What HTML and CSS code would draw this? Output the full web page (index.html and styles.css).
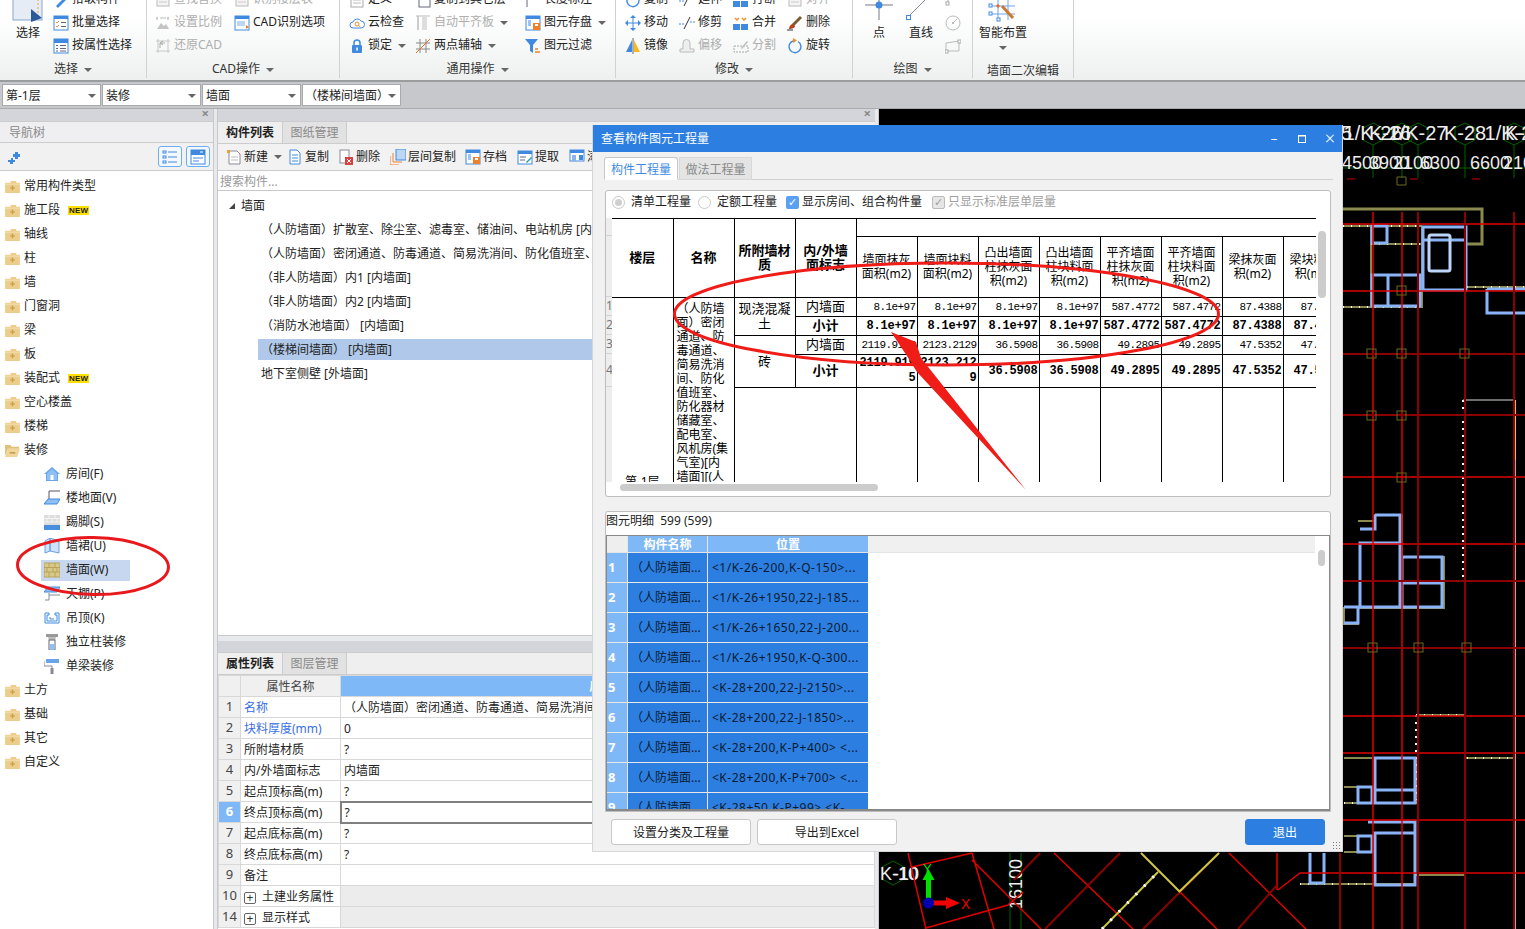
FILE: index.html
```html
<!DOCTYPE html>
<html lang="zh-CN">
<head>
<meta charset="utf-8">
<title>查看构件图元工程量</title>
<link rel="stylesheet" href="styles.css">
</head>
<body>
<svg class="defs" width="0" height="0" aria-hidden="true">
  <symbol id="pick" viewBox="0 0 16 16"><path d="M3 14l8-8 2 2-8 8z" fill="#3f8ae0"/></symbol>
  <symbol id="batch" viewBox="0 0 16 16"><rect x="1" y="1" width="14" height="14" fill="#fff" stroke="#3f8ae0"/><rect x="1" y="1" width="14" height="3" fill="#3f8ae0"/><path d="M3 7l1 1 2-2M3 11l1 1 2-2" fill="none" stroke="#f0902a"/><path d="M8 7.500h5M8 11.500h5" stroke="#666"/></symbol>
  <symbol id="prop" viewBox="0 0 16 16"><rect x="1" y="1" width="14" height="14" fill="#fff" stroke="#3f8ae0"/><rect x="1" y="1" width="14" height="4" fill="#3f8ae0"/><path d="M3 7.500h2M3 10.500h2M3 13h2M7 7.500h6M7 10.500h6M7 13h6" stroke="#667"/></symbol>
  <symbol id="gbox" viewBox="0 0 16 16"><rect x="2" y="3" width="12" height="11" fill="#f4f4f4" stroke="#bbb"/><path d="M4 7h8M4 10h8" stroke="#ccc"/></symbol>
  <symbol id="scale" viewBox="0 0 16 16"><path d="M2 14l4-6 3 3 2-2 3 5z" fill="#c4c4c4"/><path d="M2 2v3M1 3h2M13 2v3M12 3h2M5 3h6" stroke="#bbb" fill="none"/></symbol>
  <symbol id="restore" viewBox="0 0 16 16"><path d="M3 1v14M1 3h14M1 13h14M13 1v14" stroke="#c8c8c8"/><path d="M5 10V5h5M5 5l3-2M5 5l3 2" fill="none" stroke="#aaa"/></symbol>
  <symbol id="cad" viewBox="0 0 16 16"><rect x="1" y="1" width="14" height="14" fill="#fff" stroke="#3f8ae0"/><rect x="1" y="1" width="14" height="3" fill="#3f8ae0"/><rect x="3" y="6" width="8" height="5" fill="#bcd6f3"/><path d="M12 10l3 2-3 2z" fill="#f0802a"/></symbol>
  <symbol id="define" viewBox="0 0 16 16"><rect x="2" y="1" width="12" height="14" fill="#fff" stroke="#aaa"/><path d="M4 5h8M4 8h8M4 11h8" stroke="#bbb"/></symbol>
  <symbol id="cloud" viewBox="0 0 16 16"><path d="M4 13a3 3 0 0 1 0-6 4.500 4.500 0 0 1 8-1 3.500 3.500 0 0 1 0 7z" fill="#fff" stroke="#3f8ae0"/><circle cx="8" cy="9" r="2" fill="none" stroke="#f0902a"/><path d="M9.500 10.500l2 1.500" stroke="#f0902a"/></symbol>
  <symbol id="lock" viewBox="0 0 16 16"><path d="M5 8V5a3 3 0 0 1 6 0v3" fill="none" stroke="#3f8ae0" stroke-width="1.500"/><rect x="3" y="7" width="10" height="8" rx="1" fill="#3f8ae0"/><rect x="7.300" y="9.500" width="1.500" height="3" fill="#fff"/></symbol>
  <symbol id="level" viewBox="0 0 16 16"><rect x="2" y="1" width="2" height="14" fill="#ccc"/><rect x="7" y="2" width="5" height="13" fill="#ddd"/><path d="M1 1h14" stroke="#bbb"/></symbol>
  <symbol id="axis" viewBox="0 0 16 16"><path d="M5 1v14M11 1v14M1 5h14M1 11h14" stroke="#888"/><path d="M1 15L15 1" stroke="#f0702a"/></symbol>
  <symbol id="copy2" viewBox="0 0 16 16"><rect x="4" y="1" width="11" height="14" fill="#fff" stroke="#667"/></symbol>
  <symbol id="save" viewBox="0 0 16 16"><rect x="1" y="1" width="14" height="14" fill="#fff" stroke="#3f8ae0"/><rect x="1" y="1" width="14" height="3" fill="#3f8ae0"/><path d="M3 6h3M3 8h3M3 10h3" stroke="#3f8ae0"/><rect x="8" y="8" width="7" height="7" fill="#f0802a"/><rect x="10" y="9" width="3" height="2" fill="#fff"/></symbol>
  <symbol id="filter" viewBox="0 0 16 16"><path d="M0 1h13L8 7v8L5 13V7z" fill="#3f8ae0"/><path d="M10 11h3M10 14h5" stroke="#f0802a" stroke-width="1.500"/></symbol>
  <symbol id="measure" viewBox="0 0 16 16"><path d="M2 1v14" stroke="#667"/></symbol>
  <symbol id="move" viewBox="0 0 16 16"><path d="M8 3v10M3 8h10" stroke="#3f8ae0"/><path d="M8 0l3 3H5zM8 16l-3-3h6zM0 8l3-3v6zM16 8l-3 3V5z" fill="#3f8ae0"/></symbol>
  <symbol id="trim" viewBox="0 0 16 16"><path d="M0 9h5M11 7h5" stroke="#3f8ae0" stroke-dasharray="2 1"/><path d="M5 14l6-12" stroke="#334"/></symbol>
  <symbol id="merge" viewBox="0 0 16 16"><rect x="0" y="9" width="7" height="6" fill="#3f8ae0"/><rect x="8" y="9" width="7" height="6" fill="#3f8ae0"/><path d="M2 3l2 2 2-2M9 3l2 2 2-2" fill="none" stroke="#f0902a" stroke-width="1.500"/></symbol>
  <symbol id="erase" viewBox="0 0 16 16"><path d="M5 9l8-8 2 2-8 8z" fill="#7a5a30"/><path d="M2 14c0-3 2-5 4-5l2 2c0 2-3 3-6 3z" fill="#b8411a"/><path d="M0 15h6" stroke="#333"/></symbol>
  <symbol id="mirror" viewBox="0 0 16 16"><path d="M7 2v12H1z" fill="#3f8ae0"/><path d="M9 2v12h6z" fill="#f5b820"/><path d="M8 0v16" stroke="#666"/></symbol>
  <symbol id="offset" viewBox="0 0 16 16"><path d="M1 14v-3h3V5a3 3 0 0 1 7 0v6h4v3z" fill="#eee" stroke="#bbb"/></symbol>
  <symbol id="split" viewBox="0 0 16 16"><path d="M1 8h14v6H1z" fill="none" stroke="#aaa" stroke-dasharray="2 1"/><path d="M8 10l6-7 1 1-6 7z" fill="#bbb"/></symbol>
  <symbol id="rotate" viewBox="0 0 16 16"><path d="M6 3a6 6 0 1 0 5 .5" fill="none" stroke="#3f8ae0" stroke-width="1.400"/><path d="M6 0v5l4-2.500z" fill="#f0902a"/></symbol>
  <symbol id="delrow" viewBox="0 0 16 16"><rect x="2" y="1" width="9" height="13" fill="#fff" stroke="#889"/><rect x="7" y="8" width="8" height="8" fill="#d94040"/><path d="M9 10l4 4M13 10l-4 4" stroke="#fff"/></symbol>
  <symbol id="newdoc" viewBox="0 0 16 16"><path d="M3 2h8l3 3v10H3z" fill="#fff" stroke="#889"/><path d="M1 1h3v3H1z" fill="#f0a030"/><path d="M5 8h7M5 11h7" stroke="#bbb"/></symbol>
  <symbol id="copydoc" viewBox="0 0 16 16"><path d="M3 1h7l3 3v11H3z" fill="#fff" stroke="#3f8ae0"/><path d="M5 6h6M5 9h6M5 12h6" stroke="#3f8ae0"/></symbol>
  <symbol id="floorcopy" viewBox="0 0 16 16"><rect x="6" y="0" width="10" height="11" fill="#bcd6f3" stroke="#3f8ae0"/><path d="M3 4v9h9M0 7v9h9" fill="none" stroke="#f0802a"/></symbol>
  <symbol id="extract" viewBox="0 0 16 16"><rect x="1" y="2" width="14" height="13" fill="#fff" stroke="#3f8ae0"/><rect x="1" y="2" width="14" height="3" fill="#3f8ae0"/><path d="M3 8h6M3 11h5" stroke="#667"/><path d="M9 13l5-5 1 1-5 5z" fill="#2aa0a0"/></symbol>
  <symbol id="layout2" viewBox="0 0 16 16"><rect x="1" y="1" width="14" height="11" fill="#fff" stroke="#3f8ae0"/><rect x="1" y="1" width="14" height="3" fill="#3f8ae0"/><rect x="3" y="6" width="4" height="6" fill="#8ab4e8"/><rect x="10" y="6" width="4" height="5" fill="#3f8ae0"/></symbol>
  <symbol id="folder" viewBox="0 0 16 14"><path d="M0 3h6V1h6v2h4v11H0z" fill="#eccd8c"/><path d="M0 4h16v1H0z" fill="#f6e2b4"/><path d="M8 6v5M5.500 8.500h5" stroke="#c8a050" stroke-width="1.400"/></symbol>
  <symbol id="folderopen" viewBox="0 0 16 14"><path d="M0 1h6l1 2h8v2H3L0 13z" fill="#e3bf78"/><path d="M3 5h13l-3 9H0z" fill="#f0d498"/><path d="M5 9.500h6" stroke="#b8914a" stroke-width="1.400"/></symbol>
  <symbol id="house" viewBox="0 0 16 16"><path d="M8 1L0 8h2v7h12V8h2z" fill="#6aa5e8"/><path d="M8 3L3 7.500V14h10V7.500z" fill="#8fc0f4"/><rect x="6.500" y="9" width="3" height="5" fill="#fff"/></symbol>
  <symbol id="floor" viewBox="0 0 16 16"><path d="M5 9V1h11M5 9L0 14" fill="none" stroke="#556"/><path d="M4 9h12l-3 5H0z" fill="#8fc0f4" stroke="#3f8ae0"/></symbol>
  <symbol id="skirt" viewBox="0 0 16 16"><rect x="0" y="1" width="16" height="10" fill="#ddd"/><path d="M0 4.500h16M0 8h16M5 1v3.500M11 1v3.500M8 4.500V8M3 4.500V8M13 4.500V8" stroke="#f4f4f4"/><rect x="0" y="11" width="16" height="5" fill="#4a8ede"/></symbol>
  <symbol id="wains" viewBox="0 0 16 16"><path d="M1 3l5-3v13l-5 2zM6 0l9 3v12l-9-2z" fill="#cfe2f8" stroke="#6a9fe0"/></symbol>
  <symbol id="wallic" viewBox="0 0 16 16"><rect x="0" y="1" width="16" height="14" fill="#d8c88a" stroke="#b8a458"/><path d="M0 5.500h16M0 10h16M5 1v4.500M11 1v4.500M3 5.500V10M9 5.500V10M13 5.500V10M5 10v5M11 10v5" stroke="#b8a458"/></symbol>
  <symbol id="ceil" viewBox="0 0 16 16"><path d="M4 1h12l-3 5H0z" fill="#8fc0f4" stroke="#3f8ae0"/><path d="M5 7v7H1M5 9h11" fill="none" stroke="#889"/></symbol>
  <symbol id="susp" viewBox="0 0 16 16"><path d="M1 3h4v2H3v6h10V5h-2V3h4v10H1z" fill="#fff" stroke="#3f8ae0"/><path d="M6 7v2h4" fill="none" stroke="#3f8ae0"/></symbol>
  <symbol id="colm" viewBox="0 0 16 16"><rect x="2" y="0" width="12" height="3" fill="#999"/><path d="M4 3l1 3h6l1-3" fill="#bbb"/><rect x="5" y="6" width="6" height="10" fill="#fff" stroke="#667"/><path d="M6 16v-6h4v6z" fill="#8fc0f4"/></symbol>
  <symbol id="beam" viewBox="0 0 16 16"><rect x="2" y="1" width="13" height="4" fill="#6aa5e8"/><path d="M0 3v5h8v3" fill="none" stroke="#889"/><rect x="6.500" y="10" width="3" height="6" fill="#889"/></symbol>
  <symbol id="listv" viewBox="0 0 16 16"><rect x="1" y="2" width="3" height="2" fill="none" stroke="#3f8ae0"/><rect x="1" y="7" width="3" height="2" fill="none" stroke="#3f8ae0"/><rect x="1" y="12" width="3" height="2" fill="none" stroke="#3f8ae0"/><path d="M6 3h9M6 8h9M6 13h9" stroke="#3f8ae0"/></symbol>
  <symbol id="panelv" viewBox="0 0 16 16"><rect x="1" y="1" width="14" height="14" fill="#fff" stroke="#3f8ae0"/><rect x="1" y="1" width="14" height="5" fill="#3f8ae0"/><path d="M3 9h10M3 12h6" stroke="#3f8ae0"/><path d="M10 3h3" stroke="#fff"/></symbol>
  <symbol id="pin" viewBox="0 0 12 12"><path d="M7 0h3v2h2v3h-2v2H7V5H5V2h2zM3 6h2v2h2v2H5v2H2v-2H0V8h3z" fill="#3f8ae0"/></symbol>
</svg>

<div class="app">
  <header class="ribbon">
    <section class="rg g1">
      <div class="rb pad3">
        <div class="bigbtn w50">
          <svg class="bigic" viewBox="0 0 34 22"><rect x="2" y="-9" width="29" height="29" fill="#e6ecf5" stroke="#8aa8c8"/><path d="M6 -4h21v20" fill="none" stroke="#f0a030" stroke-dasharray="2 2"/><path d="M20 9l11 9-11 4z" fill="#2a5a9a"/></svg>
          <span>选择</span>
        </div>
        <div class="rc">
          <span class="ri"><svg class="ic"><use href="#pick"/></svg>拾取构件</span>
          <span class="ri"><svg class="ic"><use href="#batch"/></svg>批量选择</span>
          <span class="ri"><svg class="ic"><use href="#prop"/></svg>按属性选择</span>
        </div>
      </div>
      <div class="rl">选择<i class="caret"></i></div>
    </section>
    <section class="rg g2">
      <div class="rb pad8">
        <div class="rc w79">
          <span class="ri off"><svg class="ic"><use href="#gbox"/></svg>查找替换</span>
          <span class="ri off"><svg class="ic"><use href="#scale"/></svg>设置比例</span>
          <span class="ri off"><svg class="ic"><use href="#restore"/></svg>还原CAD</span>
        </div>
        <div class="rc">
          <span class="ri off"><svg class="ic"><use href="#gbox"/></svg>识别楼层表</span>
          <span class="ri"><svg class="ic"><use href="#cad"/></svg>CAD识别选项</span>
        </div>
      </div>
      <div class="rl">CAD操作<i class="caret"></i></div>
    </section>
    <section class="rg g3">
      <div class="rb pad9">
        <div class="rc w66">
          <span class="ri"><svg class="ic"><use href="#define"/></svg>定义</span>
          <span class="ri"><svg class="ic"><use href="#cloud"/></svg>云检查</span>
          <span class="ri"><svg class="ic"><use href="#lock"/></svg>锁定<i class="caret"></i></span>
        </div>
        <div class="rc w110">
          <span class="ri"><svg class="ic"><use href="#copy2"/></svg>复制到其它层</span>
          <span class="ri off"><svg class="ic"><use href="#level"/></svg>自动平齐板<i class="caret"></i></span>
          <span class="ri"><svg class="ic"><use href="#axis"/></svg>两点辅轴<i class="caret"></i></span>
        </div>
        <div class="rc">
          <span class="ri"><svg class="ic"><use href="#measure"/></svg>长度标注</span>
          <span class="ri"><svg class="ic"><use href="#save"/></svg>图元存盘<i class="caret"></i></span>
          <span class="ri"><svg class="ic"><use href="#filter"/></svg>图元过滤</span>
        </div>
      </div>
      <div class="rl">通用操作<i class="caret"></i></div>
    </section>
    <section class="rg g4">
      <div class="rb pad9">
        <div class="rc w54">
          <span class="ri"><svg class="ic"><use href="#rotate"/></svg>复制</span>
          <span class="ri"><svg class="ic"><use href="#move"/></svg>移动</span>
          <span class="ri"><svg class="ic"><use href="#mirror"/></svg>镜像</span>
        </div>
        <div class="rc w54">
          <span class="ri"><svg class="ic"><use href="#trim"/></svg>延伸</span>
          <span class="ri"><svg class="ic"><use href="#trim"/></svg>修剪</span>
          <span class="ri off"><svg class="ic"><use href="#offset"/></svg>偏移</span>
        </div>
        <div class="rc w54">
          <span class="ri"><svg class="ic"><use href="#merge"/></svg>打断</span>
          <span class="ri"><svg class="ic"><use href="#merge"/></svg>合并</span>
          <span class="ri off"><svg class="ic"><use href="#split"/></svg>分割</span>
        </div>
        <div class="rc w54">
          <span class="ri off"><svg class="ic"><use href="#gbox"/></svg>对齐</span>
          <span class="ri"><svg class="ic"><use href="#erase"/></svg>删除</span>
          <span class="ri"><svg class="ic"><use href="#rotate"/></svg>旋转</span>
        </div>
      </div>
      <div class="rl">修改<i class="caret"></i></div>
    </section>
    <section class="rg g5">
      <div class="rb">
        <div class="bigbtn w52">
          <svg class="bigic" viewBox="0 0 34 22"><path d="M17 0v20M3 5h28" stroke="#778" fill="none"/><circle cx="17" cy="5" r="3.500" fill="#3f8ae0"/></svg>
          <span>点</span>
        </div>
        <div class="bigbtn w32">
          <svg class="bigic" viewBox="0 0 34 22"><path d="M5 16L24 -3" stroke="#889"/><rect x="2.500" y="15.500" width="4" height="4" fill="#fff" stroke="#3f8ae0"/></svg>
          <span>直线</span>
        </div>
        <div class="rc smallc">
          <svg class="sm"><path d="M3 12V2" stroke="#aaa"/><rect x="1" y="10" width="3" height="3" fill="#fff" stroke="#aaa"/></svg>
          <svg class="sm" viewBox="0 0 16 16"><circle cx="8" cy="8" r="7" fill="none" stroke="#bbb"/><circle cx="8" cy="8" r="1" fill="#aaa"/><path d="M8 8l4-4" stroke="#bbb"/></svg>
          <svg class="sm" viewBox="0 0 16 16"><path d="M1 5l13-2v10H1z" fill="none" stroke="#bbb"/><rect x="0" y="12" width="3" height="3" fill="#fff" stroke="#aaa"/><rect x="13" y="2" width="3" height="3" fill="#fff" stroke="#aaa"/></svg>
        </div>
      </div>
      <div class="rl">绘图<i class="caret"></i></div>
    </section>
    <section class="rg g6">
      <div class="rb">
        <div class="bigbtn w60">
          <svg class="bigic" viewBox="0 0 34 22"><path d="M5 6h24M5 14h24M12 -2v22M22 -2v22" stroke="#6aa5e8" fill="none"/><rect x="3" y="4" width="3" height="3" fill="#fff" stroke="#3f8ae0"/><rect x="3" y="12" width="3" height="3" fill="#fff" stroke="#3f8ae0"/><rect x="11" y="18" width="3" height="3" fill="#fff" stroke="#3f8ae0"/><path d="M16 6l11 12" stroke="#c87a30" stroke-width="3"/><path d="M12 4l2 2-2 2-2-2z" fill="#f0602a"/></svg>
          <span>智能布置</span>
          <i class="caret solo"></i>
        </div>
      </div>
      <div class="rl edit">墙面二次编辑</div>
    </section>
  </header>

  <div class="combos">
    <div class="combo c99">第-1层<i class="caret"></i></div>
    <div class="combo c99">装修<i class="caret"></i></div>
    <div class="combo c99">墙面<i class="caret"></i></div>
    <div class="combo c99 last">（楼梯间墙面）<i class="caret"></i></div>
  </div>

  <main class="main">
    <aside class="nav">
      <div class="strip"><span class="close">×</span></div>
      <div class="navtitle">导航树</div>
      <div class="navtools">
        <svg class="pinic"><use href="#pin"/></svg>
        <span class="toolbtn"><svg class="ic"><use href="#listv"/></svg></span>
        <span class="toolbtn"><svg class="ic"><use href="#panelv"/></svg></span>
      </div>
      <ul class="navtree">
        <li class="nt"><svg class="fo"><use href="#folder"/></svg>常用构件类型</li>
        <li class="nt"><svg class="fo"><use href="#folder"/></svg>施工段<b class="new">NEW</b></li>
        <li class="nt"><svg class="fo"><use href="#folder"/></svg>轴线</li>
        <li class="nt"><svg class="fo"><use href="#folder"/></svg>柱</li>
        <li class="nt"><svg class="fo"><use href="#folder"/></svg>墙</li>
        <li class="nt"><svg class="fo"><use href="#folder"/></svg>门窗洞</li>
        <li class="nt"><svg class="fo"><use href="#folder"/></svg>梁</li>
        <li class="nt"><svg class="fo"><use href="#folder"/></svg>板</li>
        <li class="nt"><svg class="fo"><use href="#folder"/></svg>装配式<b class="new">NEW</b></li>
        <li class="nt"><svg class="fo"><use href="#folder"/></svg>空心楼盖</li>
        <li class="nt"><svg class="fo"><use href="#folder"/></svg>楼梯</li>
        <li class="nt"><svg class="fo"><use href="#folderopen"/></svg>装修</li>
        <li class="nt sub"><span class="si"><svg class="ic"><use href="#house"/></svg>房间(F)</span></li>
        <li class="nt sub"><span class="si"><svg class="ic"><use href="#floor"/></svg>楼地面(V)</span></li>
        <li class="nt sub"><span class="si"><svg class="ic"><use href="#skirt"/></svg>踢脚(S)</span></li>
        <li class="nt sub"><span class="si"><svg class="ic"><use href="#wains"/></svg>墙裙(U)</span></li>
        <li class="nt sub"><span class="si on"><svg class="ic"><use href="#wallic"/></svg>墙面(W)</span></li>
        <li class="nt sub"><span class="si"><svg class="ic"><use href="#ceil"/></svg>天棚(P)</span></li>
        <li class="nt sub"><span class="si"><svg class="ic"><use href="#susp"/></svg>吊顶(K)</span></li>
        <li class="nt sub"><span class="si"><svg class="ic"><use href="#colm"/></svg>独立柱装修</span></li>
        <li class="nt sub"><span class="si"><svg class="ic"><use href="#beam"/></svg>单梁装修</span></li>
        <li class="nt"><svg class="fo"><use href="#folder"/></svg>土方</li>
        <li class="nt"><svg class="fo"><use href="#folder"/></svg>基础</li>
        <li class="nt"><svg class="fo"><use href="#folder"/></svg>其它</li>
        <li class="nt"><svg class="fo"><use href="#folder"/></svg>自定义</li>
      </ul>
    </aside>

    <div class="mid">
      <section class="list">
        <div class="strip"><span class="close">×</span></div>
        <div class="tabs">
          <span class="tab on">构件列表</span><span class="tab">图纸管理</span>
        </div>
        <div class="tools">
          <span class="ti t55"><svg class="ic"><use href="#newdoc"/></svg>新建<i class="caret"></i></span>
          <span class="ti t51"><svg class="ic"><use href="#copydoc"/></svg>复制</span>
          <span class="ti t52"><svg class="ic"><use href="#delrow"/></svg>删除</span>
          <span class="ti t75"><svg class="ic"><use href="#floorcopy"/></svg>层间复制</span>
          <span class="ti t52"><svg class="ic"><use href="#save"/></svg>存档</span>
          <span class="ti t52"><svg class="ic"><use href="#extract"/></svg>提取</span>
          <span class="ti t52"><svg class="ic"><use href="#layout2"/></svg>添加前后缀</span>
        </div>
        <div class="search">搜索构件...</div>
        <div class="ctree">
          <div class="root"><i class="tri"></i>墙面</div>
          <div class="leaf">（人防墙面）扩散室、除尘室、滤毒室、储油间、电站机房 [内墙面]</div>
          <div class="leaf">（人防墙面）密闭通道、防毒通道、简易洗消间、防化值班室、防化器材储藏室 [内墙面]</div>
          <div class="leaf">（非人防墙面）内1 [内墙面]</div>
          <div class="leaf">（非人防墙面）内2 [内墙面]</div>
          <div class="leaf">（消防水池墙面） [内墙面]</div>
          <div class="leaf sel">（楼梯间墙面） [内墙面]</div>
          <div class="leaf">地下室侧壁 [外墙面]</div>
        </div>
      </section>
      <section class="props">
        <div class="strip short"></div>
        <div class="tabs">
          <span class="tab on">属性列表</span><span class="tab">图层管理</span>
        </div>
        <table class="ptable">
          <colgroup><col class="pc0"><col class="pc1"><col></colgroup>
          <tr><th></th><th>属性名称</th><th class="blue">属性值</th></tr>
          <tr><td class="n">1</td><td class="link">名称</td><td>（人防墙面）密闭通道、防毒通道、简易洗消间、防化值班室、防化器材储藏室</td></tr>
          <tr><td class="n">2</td><td class="link">块料厚度(mm)</td><td>0</td></tr>
          <tr><td class="n">3</td><td>所附墙材质</td><td>?</td></tr>
          <tr><td class="n">4</td><td>内/外墙面标志</td><td>内墙面</td></tr>
          <tr><td class="n">5</td><td>起点顶标高(m)</td><td>?</td></tr>
          <tr><td class="n act">6</td><td>终点顶标高(m)</td><td class="edit">?</td></tr>
          <tr><td class="n">7</td><td>起点底标高(m)</td><td>?</td></tr>
          <tr><td class="n">8</td><td>终点底标高(m)</td><td>?</td></tr>
          <tr><td class="n">9</td><td>备注</td><td></td></tr>
          <tr class="grp"><td class="n">10</td><td><span class="plus">+</span>土建业务属性</td><td></td></tr>
          <tr class="grp"><td class="n">14</td><td><span class="plus">+</span>显示样式</td><td></td></tr>
        </table>
      </section>
    </div>

    <div class="canvas">
      <svg class="cad" viewBox="879 109 646 820" xmlns="http://www.w3.org/2000/svg">
        <g fill="none" stroke="#006400">
          <path d="M1343 168H1525M1373 145V178M1402 145V178M1418 145V178M1465 145V178M1514 145V178"/>
          <path d="M1373 123l10 5v12l-10 5-10-5v-12zM1402 123l10 5v12l-10 5-10-5v-12zM1418 123l10 5v12l-10 5-10-5v-12zM1465 123l10 5v12l-10 5-10-5v-12zM1514 123l10 5v12l-10 5-10-5v-12z"/>
          <path d="M893 861l11 6v12l-11 6-11-6v-12z"/>
          <path d="M1010 853V929M1021 853V929"/>
        </g>
        <path d="M1347 179h8M1410 179h8M1472 179h8" stroke="#c00" stroke-width="1"/>
        <g fill="#eee" font-family="'Liberation Sans',sans-serif" font-size="20" text-anchor="middle">
          <text x="1331" y="140">K-25</text><text x="1373" y="140">1/K-26</text><text x="1390" y="140">K-26</text><text x="1418" y="140">1/K-27</text><text x="1465" y="140">K-28</text><text x="1514" y="140">1/K-28</text><text x="1526" y="140">K-29</text>
        </g>
        <g fill="#eee" font-family="'Liberation Sans',sans-serif" font-size="18">
          <text x="1342" y="169">4500</text><text x="1369" y="169">3900</text><text x="1393" y="169">2100</text><text x="1420" y="169">6300</text><text x="1470" y="169">6600</text><text x="1503" y="169">2100</text>
          <text x="880" y="880">K-10</text><text x="893" y="880">-10</text>
          <text transform="translate(1022 909) rotate(-90)">16100</text>
        </g>
        <g fill="none" stroke="#8a8a50" stroke-width="2">
          <path d="M1343 209H1482V244H1465" stroke-width="3"/>
          <path d="M1343 226H1422M1371 226V307M1343 307H1422V226M1370 244H1422"/>
          <path d="M1465 287H1525M1358 521H1375V515H1402V557H1444V608H1358M1344 607V624H1358V607M1344 758H1372M1344 787H1372M1344 803H1416V758M1344 836H1372M1344 852H1372M1300 884H1416M1416 875H1465M1416 715H1465V758H1515V500"/>
        </g>
        <path d="M1343 226H1422M1371 244H1422M1343 307H1422M1416 715H1465M1467 758H1515M1344 803H1372M1300 884H1372M1467 287H1525M1372 822H1415" stroke="#fff" stroke-dasharray="1 7" fill="none" stroke-width="2"/>
        <path d="M1463 400V581M1463 581H1515M1416 715V800" stroke="#fff" stroke-dasharray="2 5" fill="none" stroke-width="2"/>
        <path d="M1463 400H1515" stroke="#ddd" fill="none"/>
        <path d="M1515 400V460" stroke="#f5c400" stroke-width="2" fill="none"/>
        <path d="M1515 460V929M1465 760V925" stroke="#aaa" stroke-width="2" fill="none"/>
        <g fill="none" stroke="#8ab4f8" stroke-width="3">
          <path d="M1372 226H1387V243H1372z"/>
          <path d="M1423 227H1466V290H1423zM1423 240H1466"/>
          <rect x="1429" y="235" width="21" height="36" rx="2" stroke="#bcd4fa"/>
          <path d="M1372 275H1420V306H1372zM1388 275V306"/>
          <path d="M1487 289H1525M1487 289V313H1525"/>
          <path d="M1375 515H1400V543H1360V607H1400V543M1360 529H1375V515"/>
          <path d="M1402 557H1442V607H1402zM1402 583H1442"/>
          <path d="M1344 607H1358V623H1344"/>
          <path d="M1375 758H1415V803H1375zM1375 790H1415"/>
          <path d="M1358 787H1372V803H1358z"/>
          <path d="M1368 822H1415V885H1375V833H1415"/>
          <path d="M1358 836H1372V852H1358z"/>
          <path d="M1310 853V883H1324V853"/>
        </g>
        <g fill="none" stroke="#e00000" stroke-width="1.500">
          <path d="M1343 224H1525M1343 291H1525M1343 477H1525M1343 544H1525M1343 716H1525M1343 753H1525M1343 820H1525"/>
          <path d="M1373 212V929M1402 212V929"/>
          <path d="M908 853L926 929M912 867L972 853M926 928L1008 905L1023 892M972 853L989 912L994 929M972 860L1041 929M1054 853L1133 929M1141 853L1217 929M1229 853L1306 929M1277 853V890M1278 890L1300 873H1525"/>
        </g>
        <g fill="none" stroke="#8b0000" stroke-width="2">
          <path d="M1418 212V929M1465 212V929M1514 212V929M1340 853V929"/>
          <path d="M1343 354H1525M1343 415H1525M1343 581H1525M1343 648H1525"/>
          <path d="M1045 929L1120 853M1014 880L1040 853M1143 929L1219 853M1238 929L1277 885"/>
        </g>
        <g fill="none" stroke="#6a6a20">
          <rect x="1367" y="349" width="9" height="9"/><rect x="1397" y="349" width="9" height="9"/><rect x="1460" y="349" width="9" height="9"/>
          <rect x="1367" y="411" width="9" height="9"/><rect x="1397" y="411" width="9" height="9"/><rect x="1397" y="473" width="9" height="9"/>
          <rect x="1368" y="643" width="9" height="9"/><rect x="1414" y="643" width="9" height="9"/><rect x="1462" y="643" width="9" height="9"/>
          <rect x="1397" y="286" width="9" height="9"/><path d="M1397 177h9v8h-9z"/>
        </g>
        <path d="M1102 929L1158 872M1179 892L1219 853M1141 853L1180 892" stroke="#c8c840" stroke-width="2" fill="none"/>
        <path d="M1102 929L1158 872" stroke="#fff" stroke-dasharray="2 10" stroke-width="3" fill="none"/>
        <path d="M928.500 903V875" stroke="#00e000" stroke-width="5"/>
        <path d="M928.500 869l-6 11h12z" fill="#00e000"/>
        <path d="M928.500 903H948" stroke="#f00000" stroke-width="5"/>
        <path d="M960 903l-14-6v12z" fill="#f00000"/>
        <circle cx="928.500" cy="903" r="5.500" fill="#0000b0"/>
        <text x="923" y="873" fill="#00e000" font-size="13" font-family="'Liberation Sans',sans-serif">Y</text>
        <text x="961" y="909" fill="#f00000" font-size="14" font-family="'Liberation Sans',sans-serif">X</text>
      </svg>
    </div>
  </main>

  <div class="dialog">
    <div class="dtitle">
      <span class="dname">查看构件图元工程量</span>
      <span class="dctl">–</span><span class="dctl">
        <svg class="maxic" viewBox="0 0 8 8"><rect x="0.500" y="0.500" width="7" height="7" fill="none" stroke="#fff"/><path d="M0 1h8" stroke="#fff"/></svg></span><span class="dctl x">×</span>
    </div>
    <div class="dbody">
      <div class="dtabs">
        <span class="dtab on">构件工程量</span><span class="dtab">做法工程量</span>
      </div>
      <div class="qpanel">
        <div class="opts">
          <label class="op"><i class="radio on"></i>清单工程量</label>
          <label class="op"><i class="radio"></i>定额工程量</label>
          <label class="op"><i class="chk">✓</i>显示房间、组合构件量</label>
          <label class="op dim"><i class="chk off">✓</i>只显示标准层单层量</label>
        </div>
        <div class="qwrap">
          <div class="gutter">
            <span class="g18"></span><span class="g61"></span><span class="g19">1</span><span class="g19">2</span><span class="g19">3</span><span class="g33">4</span>
          </div>
          <div class="qclip">
            <table class="qt">
              <colgroup><col class="qc"><col class="qc"><col class="qc"><col class="qc"><col class="qc"><col class="qc"><col class="qc"><col class="qc"><col class="qc"><col class="qc"><col class="qc"><col class="qc"></colgroup>
              <tr class="h18"><th rowspan="2">楼层</th><th rowspan="2">名称</th><th rowspan="2">所附墙材质</th><th rowspan="2">内/外墙面标志</th><td colspan="8"></td></tr>
              <tr class="h61"><td class="hd">墙面抹灰面积(m2)</td><td class="hd">墙面块料面积(m2)</td><td class="hd">凸出墙面柱抹灰面积(m2)</td><td class="hd">凸出墙面柱块料面积(m2)</td><td class="hd">平齐墙面柱抹灰面积(m2)</td><td class="hd">平齐墙面柱块料面积(m2)</td><td class="hd">梁抹灰面积(m2)</td><td class="hd">梁块料面积(m2)</td></tr>
              <tr class="h19"><td rowspan="5" class="floor">第-1层</td><td rowspan="5" class="nm">（人防墙面）密闭通道、防毒通道、简易洗消间、防化值班室、防化器材储藏室、配电室、风机房(集气室)[内墙面][(人防墙面)]</td><td rowspan="2" class="mat">现浇混凝土</td><td class="ct">内墙面</td><td class="v">8.1e+97</td><td class="v">8.1e+97</td><td class="v">8.1e+97</td><td class="v">8.1e+97</td><td class="v">587.4772</td><td class="v">587.4772</td><td class="v">87.4388</td><td class="v">87.4388</td></tr>
              <tr class="h19"><td class="ct b">小计</td><td class="v b">8.1e+97</td><td class="v b">8.1e+97</td><td class="v b">8.1e+97</td><td class="v b">8.1e+97</td><td class="v b">587.4772</td><td class="v b">587.4772</td><td class="v b">87.4388</td><td class="v b">87.4388</td></tr>
              <tr class="h19"><td rowspan="2" class="mat mid2">砖</td><td class="ct">内墙面</td><td class="v">2119.9195</td><td class="v">2123.2129</td><td class="v">36.5908</td><td class="v">36.5908</td><td class="v">49.2895</td><td class="v">49.2895</td><td class="v">47.5352</td><td class="v">47.5352</td></tr>
              <tr class="h33"><td class="ct b">小计</td><td class="v b">2119.9195</td><td class="v b">2123.2129</td><td class="v b">36.5908</td><td class="v b">36.5908</td><td class="v b">49.2895</td><td class="v b">49.2895</td><td class="v b">47.5352</td><td class="v b">47.5352</td></tr>
              <tr class="h280"><td colspan="2"></td><td></td><td></td><td></td><td></td><td></td><td></td><td></td><td></td></tr>
            </table>
          </div>
          <span class="vthumb"></span>
        </div>
        <span class="hthumb"></span>
      </div>
      <div class="dpanel">
        <div class="dcap">图元明细&nbsp;&nbsp;599 (599)</div>
        <div class="dgrid">
          <div class="drow dhead"><span class="dn"></span><span class="d1">构件名称</span><span class="d2">位置</span></div>
          <div class="drow"><span class="dn">1</span><span class="d1">（人防墙面...</span><span class="d2">&lt;1/K-26-200,K-Q-150&gt;...</span></div>
          <div class="drow"><span class="dn">2</span><span class="d1">（人防墙面...</span><span class="d2">&lt;1/K-26+1950,22-J-185...</span></div>
          <div class="drow"><span class="dn">3</span><span class="d1">（人防墙面...</span><span class="d2">&lt;1/K-26+1650,22-J-200...</span></div>
          <div class="drow"><span class="dn">4</span><span class="d1">（人防墙面...</span><span class="d2">&lt;1/K-26+1950,K-Q-300...</span></div>
          <div class="drow"><span class="dn">5</span><span class="d1">（人防墙面...</span><span class="d2">&lt;K-28+200,22-J-2150&gt;...</span></div>
          <div class="drow"><span class="dn">6</span><span class="d1">（人防墙面...</span><span class="d2">&lt;K-28+200,22-J-1850&gt;...</span></div>
          <div class="drow"><span class="dn">7</span><span class="d1">（人防墙面...</span><span class="d2">&lt;K-28+200,K-P+400&gt; &lt;...</span></div>
          <div class="drow"><span class="dn">8</span><span class="d1">（人防墙面...</span><span class="d2">&lt;K-28+200,K-P+700&gt; &lt;...</span></div>
          <div class="drow"><span class="dn">9</span><span class="d1">（人防墙面...</span><span class="d2">&lt;K-28+50,K-P+99&gt; &lt;K-...</span></div>
          <span class="vthumb2"></span>
        </div>
      </div>
      <div class="dbtns">
        <button class="btn">设置分类及工程量</button>
        <button class="btn">导出到Excel</button>
        <button class="btn primary">退出</button>
      </div>
    </div>
    <span class="grip"></span>
  </div>

  <svg class="marks" viewBox="0 0 1525 929" xmlns="http://www.w3.org/2000/svg">
    <ellipse cx="93" cy="566" rx="75.500" ry="28.500" transform="rotate(1 93 566)" fill="none" stroke="#e8181c" stroke-width="3"/>
    <ellipse cx="946.500" cy="314" rx="272" ry="51" fill="none" stroke="#f01c18" stroke-width="3"/>
    <polygon points="891,332 916,342 921,358 1026,490 917,372 907,356" fill="#f01c18"/>
  </svg>
</div>
</body>
</html>
```
FILE: styles.css
```css
*{box-sizing:border-box}
html,body{margin:0;height:100%;overflow:hidden}
body{font-family:"Noto Sans","Noto Sans CJK SC",sans-serif;font-size:12px;color:#222;line-height:1.2}
ul{list-style:none;margin:0;padding:0}
.defs{position:absolute}
.app{position:relative;width:1525px;height:929px;display:flex;flex-direction:column;overflow:hidden;background:#e8e9ec}

/* ribbon */
.ribbon{height:82px;flex:none;display:flex;background:linear-gradient(#fff 20%,#eef0f0);border-bottom:2px solid #9a9c9e}
.rg{display:flex;flex-direction:column;height:78px;border-right:1px solid #cfd1d3;flex:none}
.g1{width:147px}.g2{width:193px}.g3{width:276px}.g4{width:237px}.g5{width:120px}.g6{width:101px}
.rb{height:59px;display:flex;overflow:hidden}
.pad3{padding-left:3px}.pad8{padding-left:8px}.pad9{padding-left:9px}
.rc{display:grid;grid-auto-rows:23px;margin-top:-12px;flex:none}
.w50{width:50px}.w52{width:52px}.w32{width:32px}.w60{width:60px}.w54{width:54px}.w66{width:66px}.w79{width:79px}.w110{width:110px}
.ri{display:flex;align-items:center;white-space:nowrap}
.ri.off{color:#aeaeae}
.ic{width:16px;height:16px;flex:none;margin-right:3px}
.caret{display:inline-block;width:0;height:0;border:4px solid transparent;border-top:4px solid #666;border-bottom:0;margin-left:6px;vertical-align:middle}
.rl{height:19px;text-align:center;line-height:19px;color:#333;white-space:nowrap}
.rl.edit{line-height:23px}
.bigbtn{display:flex;flex-direction:column;align-items:center;flex:none}
.bigbtn span{margin-top:3px;line-height:16px}
.bigic{width:34px;height:22px;flex:none;overflow:visible}
.caret.solo{margin:5px 0 0}
.smallc{margin-left:8px;align-items:center}
.sm{width:16px;height:16px;display:block}

/* combos */
.combos{height:27px;flex:none;display:flex;gap:1px;padding:2px 0 2px 2px;background:#c6c8cc;border-bottom:1px solid #a9abad}
.combo{background:#fff;border:1px solid #a8aaad;height:22px;line-height:21px;padding-left:3px;position:relative;color:#222}
.c99{width:99px}
.combo .caret{position:absolute;right:4px;top:9px;margin:0}
.combo.last{padding-left:2px}

/* main */
.main{flex:1;display:flex;min-height:0}
.strip{height:12px;background:#d3d5da;position:relative;flex:none}
.close{position:absolute;right:4px;top:-3px;font-size:13px;color:#888;font-weight:700}
.nav{width:214px;flex:none;background:#fff;border-right:1px solid #c8c8c8;display:flex;flex-direction:column}
.navtitle{height:22px;line-height:21px;padding-left:9px;color:#8a8a8a;background:#efeff1;border-top:1px solid #ccc;border-bottom:1px solid #ccc}
.navtools{height:28px;display:flex;align-items:center;background:#f1f1f2;border-bottom:1px solid #ccc;padding-right:3px}
.pinic{width:12px;height:12px;margin:3px auto 0 8px}
.toolbtn{width:24px;height:21px;border:1px solid #6aaef0;border-radius:3px;margin-left:4px;display:flex;align-items:center;justify-content:center;background:#f4f8fd}
.toolbtn .ic{margin:0}
.navtree{padding-top:3px}
.nt{height:24px;display:flex;align-items:center;padding-left:5px;white-space:nowrap}
.fo{width:15px;height:13px;margin-right:4px;flex:none}
.new{font:700 8px/9px "Liberation Sans",sans-serif;color:#222;background:#ffe000;margin-left:8px;padding:0 1px;letter-spacing:.2px}
.nt.sub{padding-left:41px}
.si{display:flex;align-items:center;height:21px;padding:0 20px 0 3px}
.si .ic{margin-right:6px}
.si.on{background:#c6d7ef;width:89px}

.mid{width:658px;flex:none;margin-left:3px;display:flex;flex-direction:column;border-left:1px solid #c8c8c8}
.list{height:527px;flex:none;background:#fff;border-bottom:1px solid #c8c8c8;display:flex;flex-direction:column}
.props{margin-top:5px;flex:1;background:#fff;display:flex;flex-direction:column;min-height:0}
.strip.short{height:11px}
.tabs{height:23px;display:flex;background:#efefef;border-top:1px solid #ccc;border-bottom:1px solid #ccc;flex:none}
.tab{width:64px;text-align:center;line-height:22px;color:#8a8a8a;background:#e2e2e2;border-right:1px solid #ccc}
.tab.on{width:65px;color:#222;background:#efefef;font-weight:700}
.tools{height:27px;display:flex;align-items:center;background:#f2f2f2;border-bottom:1px solid #ccc;padding-left:8px;flex:none;white-space:nowrap}
.ti{display:flex;align-items:center;flex:none}
.ti .ic{margin-right:2px}
.t55{width:61px}.t51{width:51px}.t52{width:52px}.t75{width:75px}
.search{height:20px;line-height:22px;padding-left:2px;color:#999;border-bottom:1px solid #c8c8c8;flex:none}
.ctree{padding-top:3px;flex:1;white-space:nowrap;overflow:hidden}
.root{height:24px;line-height:24px;padding-left:23px;display:flex;align-items:center}
.tri{width:0;height:0;border-left:6px solid transparent;border-bottom:6px solid #444;margin-right:6px;margin-left:-12px}
.leaf{height:24px;line-height:24px;padding-left:43px}
.leaf.sel{height:21px;line-height:21px;margin:1px 0 2px 40px;padding-left:3px;background:#b0c9ea}

.ptable{border-collapse:collapse;table-layout:fixed;width:100%;flex:none}
.ptable td,.ptable th{height:21px;padding:2px 3px 0;border:1px solid #d8d8d8;white-space:nowrap;overflow:hidden;font-weight:400;text-align:left;color:#222}
.pc0{width:22px}.pc1{width:100px}
.ptable th{background:#f0f0f0;text-align:center;color:#444}
.ptable th.blue{background:#7fb8f6;color:#fff;font-weight:700}
.ptable td.n{background:#f0f0f0;text-align:center;color:#444;font-size:13px;padding:0}
.ptable td.n.act{background:#7fb8f6;color:#fff;font-weight:700}
.ptable td.link{color:#3a6fe0}
.ptable td.edit{border:2px solid #808080}
.grp td{background:#ececec}
.grp td:nth-child(2){background:#fff}
.plus{display:inline-block;width:12px;height:12px;border:1px solid #666;border-radius:2px;line-height:9px;text-align:center;margin-right:6px;vertical-align:-1px;color:#333}

.canvas{flex:1;margin-left:3px;background:#000;position:relative;overflow:hidden;border-left:1px solid #c8c8c8}
.cad{position:absolute;left:0;top:0;width:646px;height:820px;display:block}

/* dialog */
.dialog{position:absolute;left:592px;top:125px;width:751px;height:727px;display:flex;flex-direction:column;background:#efeff0;border:1px solid #d4d6da;border-top:0;z-index:5}
.dtitle{height:27px;background:#2c7fe0;color:#fff;display:flex;align-items:center;padding:1px 0 0 8px;flex:none}
.dname{flex:1}
.dctl{width:28px;text-align:center;font-size:13px;display:flex;justify-content:center;align-items:center}
.dctl.x{font-size:18px;font-weight:300;margin-right:-2px}
.maxic{width:8px;height:8px}
.dbody{flex:1;display:flex;flex-direction:column;padding:5px 12px 0 12px;min-height:0;background:#f1f1f2}
.dtabs{height:23px;display:flex;flex:none;margin-bottom:10px;border-bottom:1px solid #d0d0d0;margin-right:-3px;gap:1px}
.dtab{width:73px;height:23px;line-height:23px;text-align:center;background:#e4e4e4;color:#8a8a8a;border:1px solid #d8d8d8}
.dtab.on{width:74px;margin-left:-1px;background:#fff;color:#3f8ae0;border-color:#c8c8c8;border-bottom-color:#fff;border-radius:3px 3px 0 0}
.qpanel{height:307px;flex:none;margin-right:-1px;background:#fff;border:1px solid #bdbdbd;border-radius:3px;position:relative;overflow:hidden}
.opts{height:27px;display:flex;align-items:center;padding:0 0 4px 6px}
.op{display:flex;align-items:center;margin-right:7px;white-space:nowrap}
.op:nth-child(2){margin-right:9px}
.op:nth-child(3){margin-right:10px}
.op.dim{color:#a0a0a0}
.radio{width:13px;height:13px;border:1px solid #c8c8c8;border-radius:50%;margin-right:6px;background:#fff;position:relative;flex:none}
.radio.on::after{content:"";position:absolute;inset:2px;border-radius:50%;background:#cfcfcf}
.chk{width:13px;height:13px;border-radius:2px;background:#5b9ff0;color:#fff;font-style:normal;font-size:11px;line-height:13px;text-align:center;margin-right:3px;flex:none;font-family:"DejaVu Sans",sans-serif}
.chk.off{background:#e6e6e6;color:#a0a0a0;border:1px solid #bbb;line-height:11px}
.qwrap{display:flex;height:264px;position:relative}
.gutter{width:6px;flex:none;display:flex;flex-direction:column;background:#ededed;color:#777;overflow:hidden;font-size:12px}
.gutter span{border-bottom:1px solid #d4d4d4;flex:none;display:flex;align-items:center;padding-left:0}
.g18{height:18px}.g61{height:61px}.g19{height:19px}.g33{height:33px}
.qclip{width:704px;height:264px;overflow:hidden;flex:none}
.qt{border-collapse:collapse;table-layout:fixed;width:732px;font-size:12px;color:#000;border-top:1px solid #000}
.qc{width:61px}
.qt th,.qt td{border:1px solid #000;padding:0;text-align:center;overflow:hidden}
.qt th{font-size:13px;font-weight:700;padding:0 3px 3px;line-height:14px}
.qt tr>:first-child{border-left:0}
.h18{height:18px}.h61{height:61px}.h19{height:19px}.h33{height:33px}.h280{height:280px}
.qt .hd{padding:2px 5px;line-height:14px}
.qt .v{text-align:right;font:11px/13px "Liberation Mono",monospace;letter-spacing:-.6px;padding-right:1px;word-break:break-all}
.qt .v.b{font-weight:700;font-size:12px;letter-spacing:-.2px;line-height:15px}
.qt .ct{font-size:13px}
.qt .ct.b{font-weight:700}
.qt .mat{font-size:13px;line-height:15px;padding:3px 4px 0;vertical-align:top}
.qt .mat.mid2{vertical-align:middle;padding-top:0}
.qt .nm{vertical-align:top;text-align:left;padding:4px 3px 0;line-height:14px}
.vthumb{position:absolute;right:4px;top:13px;width:8px;height:67px;border-radius:4px;background:#ccc}
.hthumb{position:absolute;left:14px;bottom:5px;width:258px;height:7px;border-radius:4px;background:#ccc}
.dpanel{flex:none;margin-top:14px;margin-right:-1px;height:301px;background:#fff;border:1px solid #bdbdbd;border-radius:3px 3px 0 0;display:flex;flex-direction:column}
.dcap{height:23px;line-height:18px;flex:none}
.dgrid{flex:1;min-height:0;overflow:hidden;border:1px solid #888;border-width:1px 1px 2px 1px;position:relative}
.drow{display:flex;height:30px;border-bottom:1px solid #e8e8e8;width:261px;color:#0a1c33}
.dn{width:21px;flex:none;background:#7fb8f6;color:#fff;font-weight:700;font-size:13px;padding-left:1px;display:flex;align-items:center;border-right:1px solid #e8e8e8}
.d1{width:80px;flex:none;background:#2c7ee0;padding-left:3px;line-height:30px;border-right:1px solid #e8e8e8;white-space:nowrap;overflow:hidden}
.d2{width:160px;flex:none;background:#2c7ee0;padding-left:4px;line-height:30px;letter-spacing:.5px;white-space:nowrap;overflow:hidden}
.drow.dhead{height:17px;width:708px;background:#f0f0f0;border-bottom:1px solid #e4e4e4}
.dhead .dn{background:#eee}
.dhead .d1,.dhead .d2{background:#7fb8f6;color:#fff;font-weight:700;text-align:center;line-height:17px;padding:0;letter-spacing:0}
.vthumb2{position:absolute;right:4px;top:14px;width:7px;height:16px;border-radius:4px;background:#ccc}
.dbtns{display:flex;align-items:flex-start;padding:7px 0 0 6px;gap:6px;flex:none}
.btn{font:inherit;width:140px;height:26px;border:1px solid #c8c8c8;border-radius:3px;background:#fff;color:#222;padding:2px 0 0}
.btn.primary{width:80px;margin-left:auto;margin-right:5px;background:#2c7fe0;border-color:#2c7fe0;color:#fff}
.grip{position:absolute;right:2px;bottom:2px;width:8px;height:8px;background:radial-gradient(circle,#777 40%,transparent 45%) 0 0/3px 3px}
.marks{position:absolute;left:0;top:0;width:1525px;height:929px;z-index:10;pointer-events:none}
```
